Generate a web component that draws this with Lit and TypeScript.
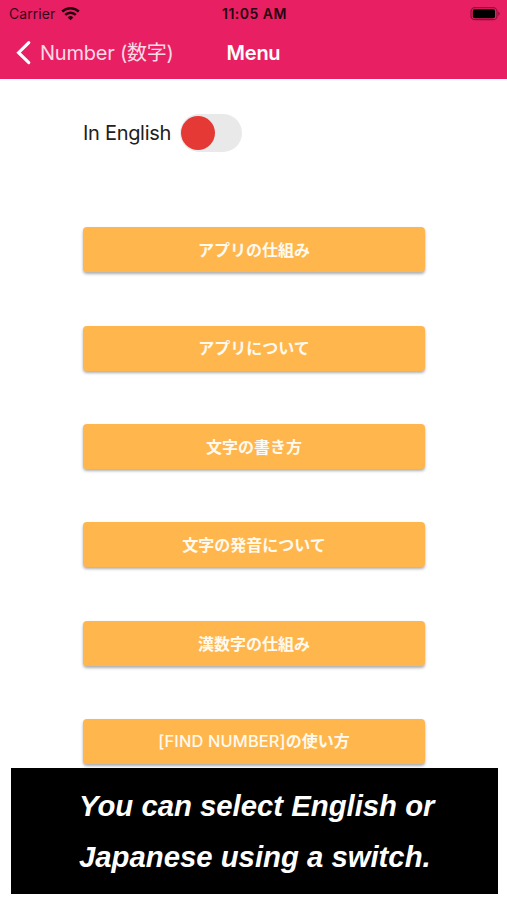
import { LitElement, html, css } from "lit";
import { customElement } from "lit/decorators.js";

interface Item {
  latin?: string;
  text: string;
}

const ITEMS: Item[] = [
  { text: "アプリの仕組み" },
  { text: "アプリについて" },
  { text: "文字の書き方" },
  { text: "文字の発音について" },
  { text: "漢数字の仕組み" },
  { latin: "[FIND NUMBER]", text: "の使い方" },
];

@customElement("app-root")
export class AppRoot extends LitElement {
  static styles = css`
    :host {
      display: block;
      position: relative;
      width: 507px;
      height: 900px;
      overflow: hidden;
      background: #fff;
      font-family: Inter, "Noto Sans CJK JP", sans-serif;
      color: #212121;
    }
    * { box-sizing: border-box; }
    header { height: 79px; background: #e91f63; }
    .status {
      display: grid;
      grid-template-columns: 1fr auto 1fr;
      align-items: center;
      height: 27px;
      padding: 0 7px 0 9px;
      font-size: 13.9px;
      color: #32061a;
    }
    .carrier { display: flex; align-items: center; gap: 6px; letter-spacing: 0.1px; }
    .time { font-weight: 600; font-size: 14px; letter-spacing: 0.5px; color: #26040f; }
    .battery { justify-self: end; }
    .nav {
      display: grid;
      grid-template-columns: 1fr auto 1fr;
      align-items: center;
      height: 52px;
      padding: 0 15px;
      color: #fff;
      font-size: 20px;
      line-height: 24px;
      white-space: nowrap;
    }
    .back { display: flex; align-items: center; gap: 9px; color: #fcd9e5; }
    .back-label { font-size: 20px; letter-spacing: -0.22px; height: 25px; }
    .title { font-weight: 600; letter-spacing: -0.25px; }
    svg { display: block; }
    main { padding: 35px 82px 0 83px; }
    .language { display: flex; align-items: center; height: 38px; gap: 9px; font-size: 20px; letter-spacing: -0.3px; }
    .switch { width: 62px; height: 38px; border-radius: 19px; background: #e9e9ea; padding: 2px 1px; }
    .knob { width: 34px; height: 34px; border-radius: 50%; background: #e53935; }
    .menu { display: grid; gap: 53.4px; margin-top: 75.3px; }
    .item {
      height: 45px;
      border: 0;
      border-radius: 4px;
      background: #ffb74d;
      box-shadow: 0 2px 3px rgba(0, 0, 0, 0.32);
      color: #fffaf0;
      font: 700 16px/24px "Noto Sans CJK JP", sans-serif;
      padding: 0 0 1.6px;
    }
    .latin { font: 500 16.4px/24px Inter, sans-serif; letter-spacing: 0.15px; }
    .caption {
      position: absolute;
      left: 11px;
      top: 768px;
      width: 487px;
      height: 126px;
      padding: 12px 0 0 68px;
      background: #000;
      color: #fff;
      font: italic bold 29.3px/51px "Liberation Sans", sans-serif;
      white-space: nowrap;
    }
  `;

  render() {
    return html`
      <header>
        <div class="status">
          <div class="carrier">
            <span>Carrier</span>
            <svg width="19" height="14" viewBox="0 0 19 14" fill="none" stroke="#22030f" stroke-width="2.5">
              <path d="M1.2 4.5a12 12 0 0 1 16.6 0M4.2 7.9a7.6 7.6 0 0 1 10.6 0" />
              <path d="M9.5 13.2 6.7 10.4a4 4 0 0 1 5.6 0z" fill="#22030f" stroke="none" />
            </svg>
          </div>
          <span class="time">11:05 AM</span>
          <svg class="battery" width="30" height="14" viewBox="0 0 30 14">
            <rect x="1" y=".7" width="26" height="12" rx="3.8" fill="none" stroke="#6b0f2e" stroke-width="1.2" opacity=".75" />
            <rect x="2.8" y="2.2" width="22.2" height="9" rx="1.8" fill="#000" />
            <path d="M28.2 4.7q1.6.6 1.6 2t-1.6 2z" fill="#6b0f2e" opacity=".7" />
          </svg>
        </div>
        <div class="nav">
          <div class="back">
            <svg width="16" height="26" viewBox="0 0 16 26" fill="none" stroke="#fff" stroke-width="3.1" stroke-linecap="round">
              <path d="M13.8 2.7 3.6 12.7l10.2 10" />
            </svg>
            <span class="back-label">Number (数字)</span>
          </div>
          <span class="title">Menu</span>
        </div>
      </header>
      <main>
        <div class="language">
          <span>In English</span>
          <div class="switch" role="switch" aria-checked="false"><div class="knob"></div></div>
        </div>
        <div class="menu">
          ${ITEMS.map(
            (item) => html`<button class="item">${item.latin ? html`<span class="latin">${item.latin}</span>` : ""}${item.text}</button>`
          )}
        </div>
      </main>
      <div class="caption">You can select English or<br />Japanese using a switch.</div>
    `;
  }
}
